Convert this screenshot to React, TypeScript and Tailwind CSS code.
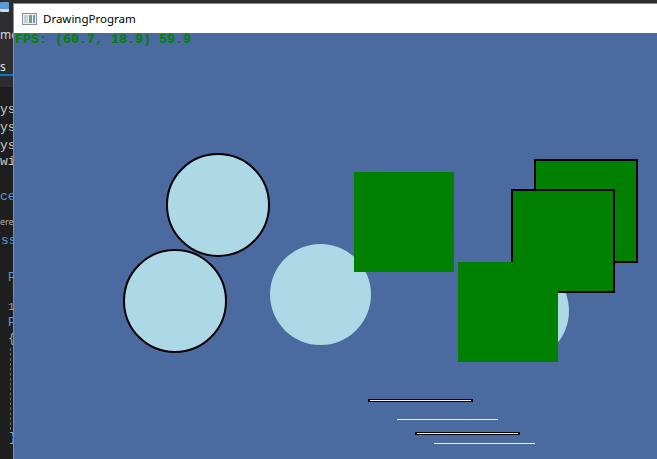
const mono = { fontFamily: '"Liberation Mono", "DejaVu Sans Mono", monospace' };
const sans = { fontFamily: '"Noto Sans", "Liberation Sans", sans-serif' };

const EditorStrip = () => {
  return (
    <div
      className="w-[13px] shrink-0 h-full overflow-hidden bg-[#1e1e1e] flex flex-col text-[13px] whitespace-nowrap"
      style={mono}
    >
      <div className="h-[87px] shrink-0 bg-[#2d2d30] flex flex-col">
        <div className="mt-[2px] ml-0 w-[9px] h-[10px] bg-[#5b9bd5] rounded-[1px] border-b-[3px] border-[#c9ddf0]" />
        <div className="mt-[16px] h-[14px] leading-[14px] text-[12px] text-[#d4d4d4] overflow-hidden" style={sans}>
          me
        </div>
        <div className="mt-[18px] h-[14px] leading-[14px] text-[12px] text-[#e0e0e0]" style={sans}>
          s
        </div>
        <div className="h-[2px] bg-[#007acc]" />
      </div>
      <div className="mt-[15px] h-[16px] leading-[16px] text-[#c8c8c8] overflow-hidden">ys</div>
      <div className="mt-[2px] h-[16px] leading-[16px] text-[#c8c8c8] overflow-hidden">ys</div>
      <div className="mt-[2px] h-[16px] leading-[16px] text-[#c8c8c8] overflow-hidden">ys</div>
      <div className="h-[16px] leading-[16px] text-[#c8c8c8] overflow-hidden">wi</div>
      <div className="mt-[19px] h-[16px] leading-[16px] text-[#569cd6] overflow-hidden">ce</div>
      <div className="mt-[11px] h-[12px] leading-[12px] text-[9px] text-[#b0b0b0] overflow-hidden" style={sans}>
        ere
      </div>
      <div className="mt-[5px] h-[16px] leading-[16px] text-[#569cd6] pl-[1px] overflow-hidden">ss</div>
      <div className="mt-[21px] h-[16px] leading-[16px] text-[#569cd6] pl-[8px] overflow-hidden">P</div>
      <div className="mt-[13px] h-[16px] leading-[16px] text-[11px] text-[#9a9a9a] pl-[8px]">1</div>
      <div className="h-[16px] leading-[16px] text-[#569cd6] pl-[8px] overflow-hidden">P</div>
      <div className="h-[16px] leading-[16px] text-[#8fb0d8] pl-[8px] overflow-hidden">{"{"}</div>
      <div className="ml-[10px] mt-[1px] h-[82px] w-0 border-l border-dashed border-[#6a6a6a]" />
      <div className="h-[16px] leading-[16px] text-[#8fb0d8] pl-[9px] overflow-hidden">{"}"}</div>
    </div>
  );
};

const TitleIcon = () => (
  <div className="w-[15px] h-[12px] border border-[#8a8f96] bg-[#eef2f4] flex p-[1px] gap-[1px]">
    <div className="w-[4px] h-full bg-[#c8d2d8]" />
    <div className="w-[3px] h-full bg-[#5ea58a]" />
    <div className="flex-1 h-full bg-[#6d98c4]" />
  </div>
);

const Canvas = () => {
  return (
    <div className="relative flex-1 bg-[#4b6a9f] overflow-hidden">
      <div className="pl-[1px] text-[13.33px] leading-[13.33px] font-bold text-[#008000]" style={mono}>
        FPS: (60.7, 18.9) 59.9
      </div>

      {/* circles */}
      <div className="absolute left-[152px] top-[120px] w-[104px] h-[104px] rounded-full bg-[#add8e6] border-2 border-black" />
      <div className="absolute left-[109px] top-[216px] w-[104px] h-[104px] rounded-full bg-[#add8e6] border-2 border-black" />
      <div className="absolute left-[256px] top-[211px] w-[101px] h-[101px] rounded-full bg-[#add8e6]" />

      {/* squares */}
      <div className="absolute left-[340px] top-[139px] w-[100px] h-[100px] bg-[#008000]" />
      <div className="absolute left-[520px] top-[126px] w-[104px] h-[104px] bg-[#008000] border-[2.5px] border-black" />
      <div className="absolute left-[455px] top-[228px] w-[100px] h-[100px] rounded-full bg-[#add8e6]" />
      <div className="absolute left-[497px] top-[156px] w-[104px] h-[104px] bg-[#008000] border-[2.5px] border-black" />
      <div className="absolute left-[444px] top-[229px] w-[100px] h-[100px] bg-[#008000]" />

      {/* lines */}
      <div className="absolute left-[354px] top-[366px] w-[105px] h-[3px] bg-[#fff0f0] border-x-2 border-y border-black" />
      <div className="absolute left-[383px] top-[386px] w-[101px] h-px bg-[#f0f0fa]" />
      <div className="absolute left-[401px] top-[399px] w-[105px] h-[3px] bg-[#fff0f0] border-x-2 border-y border-black" />
      <div className="absolute left-[420px] top-[410px] w-[101px] h-px bg-[#f0f0fa]" />
    </div>
  );
};

export default function App() {
  return (
    <div className="w-[657px] h-[459px] overflow-hidden flex bg-[#1e1e1e]">
      <EditorStrip />
      <div className="flex-1 flex flex-col min-w-0">
        <div className="h-[3px] shrink-0 bg-[#2d2d30]" />
        <div className="flex-1 flex flex-col border-l border-t border-[#c27b55] min-h-0">
          <div className="h-[29px] shrink-0 bg-white flex items-center pl-[8px] gap-[6px]">
            <TitleIcon />
            <span className="text-[11.5px] text-black" style={sans}>
              DrawingProgram
            </span>
          </div>
          <Canvas />
        </div>
      </div>
    </div>
  );
}
